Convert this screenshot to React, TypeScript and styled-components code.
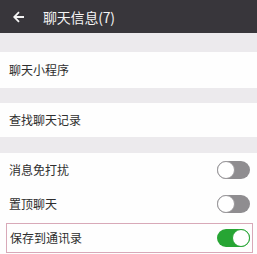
import React from "react";
import styled, { createGlobalStyle } from "styled-components";

const Global = createGlobalStyle`
  html, body { margin: 0; padding: 0; }
  body {
    width: 257px;
    height: 254px;
    overflow: hidden;
    background: #eceaed;
    font-family: "Noto Sans CJK SC", "Noto Sans", sans-serif;
  }
`;

const Page = styled.div`
  display: flex;
  flex-direction: column;
  width: 257px;
  height: 254px;
  background: #eceaed;
`;

const Header = styled.div`
  height: 33px;
  display: flex;
  align-items: center;
  background: #38363b;
  color: #f4f4f4;
  padding-left: 12px;
  box-sizing: border-box;
  flex-shrink: 0;
`;

const BackBtn = styled.div`
  width: 14px;
  height: 14px;
  display: flex;
  align-items: center;
  justify-content: center;
  margin-right: 17px;
`;

const Title = styled.div`
  font-size: 14px;
  line-height: 1;
  letter-spacing: -0.2px;
`;

const Spacer = styled.div<{ $h: number }>`
  height: ${(p) => p.$h}px;
  flex-shrink: 0;
`;

const Section = styled.div`
  background: #fefefe;
  display: flex;
  flex-direction: column;
  flex-shrink: 0;
`;

const Row = styled.div<{ $h: number }>`
  height: ${(p) => p.$h}px;
  display: flex;
  align-items: center;
  justify-content: space-between;
  padding: 0 7px 0 9px;
  box-sizing: border-box;
`;

const HighlightWrap = styled.div`
  height: 34px;
  padding: 2px 4px 2px 6px;
  box-sizing: border-box;
  display: flex;
`;

const HighlightBox = styled.div`
  flex: 1;
  border: 1px solid #d8a9b8;
  display: flex;
  align-items: center;
  justify-content: space-between;
  padding: 0 2px 0 3px;
  box-sizing: border-box;
`;

const Label = styled.span`
  font-size: 12px;
  color: #2e2e2e;
  line-height: 1;
`;

const Track = styled.div<{ $on: boolean }>`
  width: 33px;
  height: 18px;
  border-radius: 9px;
  background: ${(p) => (p.$on ? "#27a534" : "#8f8d90")};
  display: flex;
  align-items: center;
  justify-content: ${(p) => (p.$on ? "flex-end" : "flex-start")};
  box-sizing: border-box;
`;

const Knob = styled.div<{ $on: boolean }>`
  width: 18px;
  height: 18px;
  border-radius: 50%;
  background: #ffffff;
  box-sizing: border-box;
  border: 1.5px solid ${(p) => (p.$on ? "#27a534" : "#9a989b")};
`;

const Toggle = ({ on }: { on: boolean }) => (
  <Track $on={on}>
    <Knob $on={on} />
  </Track>
);

export default function App() {
  return (
    <>
      <Global />
      <Page>
        <Header>
          <BackBtn>
            <svg width="12" height="12" viewBox="0 0 12 12">
              <path
                d="M11 6H1.5M6 1.2L1.2 6L6 10.8"
                stroke="#f4f4f4"
                strokeWidth="1.8"
                fill="none"
              />
            </svg>
          </BackBtn>
          <Title>聊天信息(7)</Title>
        </Header>
        <Spacer $h={19} />
        <Section>
          <Row $h={36}>
            <Label>聊天小程序</Label>
          </Row>
        </Section>
        <Spacer $h={15} />
        <Section>
          <Row $h={34}>
            <Label>查找聊天记录</Label>
          </Row>
        </Section>
        <Spacer $h={16} />
        <Section>
          <Row $h={34}>
            <Label>消息免打扰</Label>
            <Toggle on={false} />
          </Row>
          <Row $h={34}>
            <Label>置顶聊天</Label>
            <Toggle on={false} />
          </Row>
          <HighlightWrap>
            <HighlightBox>
              <Label>保存到通讯录</Label>
              <Toggle on={true} />
            </HighlightBox>
          </HighlightWrap>
        </Section>
      </Page>
    </>
  );
}
